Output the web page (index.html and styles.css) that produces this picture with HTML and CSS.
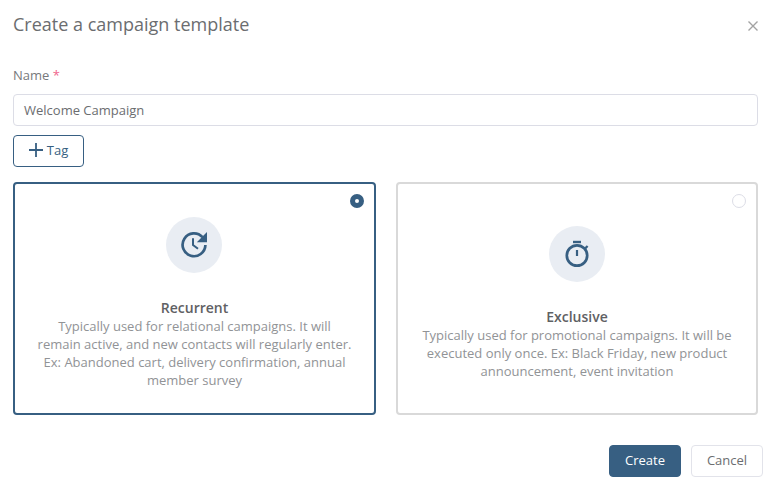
FILE: index.html
```html
<!DOCTYPE html>
<html lang="en">
<head>
<meta charset="utf-8">
<title>Create a campaign template</title>
<link rel="stylesheet" href="styles.css">
</head>
<body>
<div class="modal">
  <header class="head">
    <h1 class="title">Create a campaign template</h1>
    <svg class="close" width="10" height="10" viewBox="0 0 10 10"><path d="M.5.5l9 9M9.5.5l-9 9" stroke="#a3a3a3" stroke-width="1.4" fill="none"/></svg>
  </header>
  <div class="body">
    <label class="label">Name <span class="req">*</span></label>
    <div class="input">Welcome Campaign</div>
    <button class="tag"><svg width="14" height="14" viewBox="0 0 14 14"><path d="M7 0v14M0 7h14" stroke="#375f82" stroke-width="1.8" fill="none"/></svg><span>Tag</span></button>
    <div class="cards">
      <div class="card selected">
        <span class="radio on"></span>
        <div class="circle">
          <svg width="28" height="28" viewBox="0 0 28 28" fill="none"><path d="M22.5 6.2A11.4 11.4 0 1 0 25.4 14" stroke="#375f82" stroke-width="2.7"/><path d="M27 1v10.2H16.8z" fill="#375f82"/><path d="M13 7.2V14l5 3.8" stroke="#375f82" stroke-width="2"/></svg>
        </div>
        <div class="card-title">Recurrent</div>
        <p class="card-text">Typically used for relational campaigns. It will remain active, and new contacts will regularly enter. Ex: Abandoned cart, delivery confirmation, annual member survey</p>
      </div>
      <div class="card">
        <span class="radio"></span>
        <div class="circle">
          <svg width="28" height="28" viewBox="0 0 28 28" fill="none"><circle cx="14" cy="15.5" r="10.2" stroke="#375f82" stroke-width="2.7"/><path d="M10 2h8" stroke="#375f82" stroke-width="2.4"/><path d="M14 10v6" stroke="#375f82" stroke-width="2.2"/><path d="M22 8.6l2.6-2.6" stroke="#375f82" stroke-width="2.2"/></svg>
        </div>
        <div class="card-title">Exclusive</div>
        <p class="card-text">Typically used for promotional campaigns. It will be executed only once. Ex: Black Friday, new product announcement, event invitation</p>
      </div>
    </div>
  </div>
  <footer class="foot">
    <button class="btn primary">Create</button>
    <button class="btn">Cancel</button>
  </footer>
</div>
</body>
</html>
```
FILE: styles.css
```css
* { box-sizing: border-box; }
html, body { margin: 0; height: 100%; background: #fff; }
body { font-family: "Open Sans", sans-serif; font-size: 13px; color: #6b6d70; overflow: hidden; }
.modal { width: 776px; height: 489px; display: flex; flex-direction: column; }
.head { height: 50px; padding: 0 18px 2px 13px; display: flex; align-items: center; justify-content: space-between; }
.title { margin: 0; font-size: 18px; font-weight: 400; color: #6b6d70; line-height: 24px; }
.close { margin-top: 3px; }
.body { padding: 16px 18px 0 13px; }
.label { display: block; height: 28px; line-height: 18px; color: #77797c; }
.req { color: #f0648c; }
.input { height: 32px; border: 1px solid #dcdde6; border-radius: 4px; padding: 0 10px; line-height: 30px; color: #6b6d70; }
.tag { margin-top: 9px; width: 71px; height: 32px; background: #fff; border: 1px solid #375f82; border-radius: 4px; color: #375f82; font: 13px "Open Sans", sans-serif; display: flex; align-items: center; justify-content: center; gap: 4px; padding: 0 0 2px; }
.cards { margin-top: 15px; display: grid; grid-template-columns: 363px 362px; gap: 20px; }
.card { position: relative; height: 233px; border: 2px solid #d9d9d9; border-radius: 4px; display: flex; flex-direction: column; align-items: center; justify-content: center; padding: 9px 20px 0; text-align: center; }
.card.selected { border-color: #375f82; }
.circle { width: 56px; height: 56px; border-radius: 50%; background: #e9edf3; display: flex; align-items: center; justify-content: center; margin-bottom: 26px; }
.selected .circle { margin-right: 1px; }
.card-title { font-weight: 600; font-size: 14px; line-height: 18px; color: #5f6164; }
.card-text { margin: 0; line-height: 18px; color: #919396; }
.radio { position: absolute; top: 10px; right: 10px; width: 14px; height: 14px; border: 1px solid #dcdde6; border-radius: 50%; }
.radio.on { border: 5px solid #375f82; }
.foot { margin-top: 30px; padding-right: 13px; display: flex; justify-content: flex-end; gap: 10px; }
.btn { width: 72px; height: 32px; border: 1px solid #e2e3ea; border-radius: 4px; background: #fff; color: #6b6d70; font: 13px "Open Sans", sans-serif; padding: 0 0 2px; }
.btn.primary { background: #375f82; border-color: #375f82; color: #fff; font-weight: 500; }
```
